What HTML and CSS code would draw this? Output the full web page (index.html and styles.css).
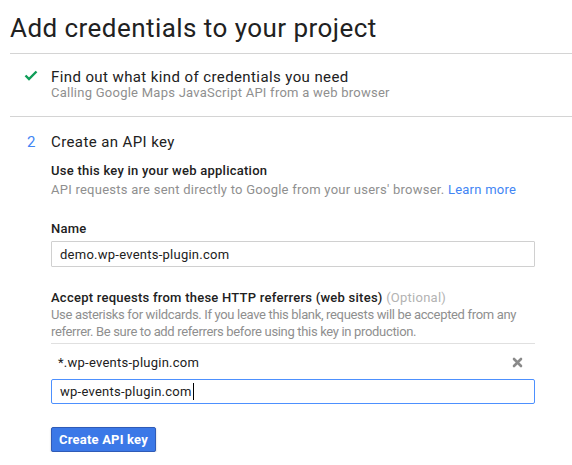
FILE: index.html
```html
<!DOCTYPE html>
<html>
<head>
<meta charset="utf-8">
<link rel="stylesheet" href="styles.css">
</head>
<body>
<h1 class="title">Add credentials to your project</h1>
<div class="step step-done">
  <div class="step-marker">
    <svg class="check" width="14" height="11" viewBox="0 0 14 11"><path d="M1.5 5.5 L5 9 L12.5 1.5" fill="none" stroke="#0f9d58" stroke-width="2.4"/></svg>
  </div>
  <div class="step-body">
    <div class="step-title">Find out what kind of credentials you need</div>
    <div class="step-sub">Calling Google Maps JavaScript API from a web browser</div>
  </div>
</div>
<div class="step step-active">
  <div class="step-marker num">2</div>
  <div class="step-body">
    <div class="step-title">Create an API key</div>
    <div class="label first">Use this key in your web application</div>
    <div class="help help-gap">API requests are sent directly to Google from your users' browser. <a class="link" href="#">Learn more</a></div>

    <div class="label field-label name-label">Name</div>
    <input class="field" type="text" value="demo.wp-events-plugin.com">

    <div class="label field-label">Accept requests from these HTTP referrers (web sites) <span class="optional">(Optional)</span></div>
    <div class="help help-wide">Use asterisks for wildcards. If you leave this blank, requests will be accepted from any<br>referrer. Be sure to add referrers before using this key in production.</div>

    <div class="ref-list">
      <div class="ref-row">
        <span class="ref-text">*.wp-events-plugin.com</span>
        <svg class="remove" width="11" height="11" viewBox="0 0 11 11"><path d="M2 2 L9 9 M9 2 L2 9" stroke="#8a8a8a" stroke-width="2.6" stroke-linecap="round"/></svg>
      </div>
      <div class="field focused"><span class="field-text">wp-events-plugin.com</span><span class="caret"></span></div>
    </div>

    <button class="btn-primary" type="button">Create API key</button>
  </div>
</div>
</body>
</html>
```

FILE: styles.css
```css
html, body {
  margin: 0;
  padding: 0;
  background: #fff;
}
body {
  font-family: Roboto, "Noto Sans", Arial, sans-serif;
  color: #212121;
  width: 572px;
  overflow: hidden;
  letter-spacing: 0.25px;
}
.title {
  margin: 12px 0 0 10px;
  padding: 0 0 9px 0;
  font-size: 26px;
  font-weight: 400;
  line-height: 32px;
  letter-spacing: 0.45px;
  color: #212121;
  border-bottom: 1px solid #d4d4d4;
}
.step {
  display: flex;
  margin-left: 10px;
}
.step-done {
  padding: 15px 0 15px 0;
  border-bottom: 1px solid #d4d4d4;
}
.step-active {
  padding: 17px 0 0 0;
}
.step-marker {
  width: 41px;
  flex: none;
}
.check {
  display: block;
  margin: 1px 0 0 14px;
}
.num {
  font-size: 15px;
  line-height: 16px;
  color: #4285f4;
  padding-left: 17px;
  box-sizing: border-box;
}
.step-body {
  width: 484px;
}
.step-title {
  font-size: 15px;
  line-height: 16px;
  letter-spacing: 0.4px;
  color: #212121;
}
.step-sub {
  font-size: 13px;
  line-height: 16px;
  color: #8f8f8f;
}
.label {
  font-size: 13px;
  line-height: 17px;
  font-weight: 500;
  color: #212121;
}
.label.first {
  margin-top: 12px;
}
.help {
  font-size: 13px;
  line-height: 17px;
  color: #8f8f8f;
}
.help-gap {
  margin-top: 2px;
}
.help-wide {
  margin-right: -30px;
  letter-spacing: -0.33px;
  white-space: nowrap;
}
.link {
  color: #4285f4;
  text-decoration: none;
}
.field-label {
  margin-top: 22px;
}
.name-label {
  margin-bottom: 4px;
}
.optional {
  font-weight: 400;
  color: #b3b3b3;
}
.field {
  display: block;
  box-sizing: border-box;
  width: 484px;
  height: 26px;
  margin: 0;
  padding: 0 8px;
  border: 1px solid #d0d0d0;
  border-radius: 1px;
  font-family: Roboto, "Noto Sans", Arial, sans-serif;
  font-size: 13px;
  letter-spacing: 0.25px;
  color: #212121;
  outline: none;
  background: #fff;
}
.ref-list {
  margin-top: 3px;
  border-top: 1px solid #e0e0e0;
}
.ref-row {
  display: flex;
  align-items: center;
  justify-content: space-between;
  padding: 10px 12px 8px 7px;
  font-size: 13px;
  line-height: 17px;
  color: #212121;
}
.remove {
  display: block;
}
.field.focused {
  display: flex;
  align-items: center;
  height: 25px;
  border: 1px solid #4d90fe;
  border-radius: 2px;
  line-height: 17px;
}
.caret {
  display: inline-block;
  width: 1px;
  height: 17px;
  background: #000;
  margin-left: 1px;
}
.btn-primary {
  display: block;
  margin-top: 23px;
  box-sizing: border-box;
  width: 105px;
  height: 25px;
  padding: 0;
  border: 1px solid #2f5bb7;
  border-radius: 2px;
  background: #3b78e7;
  box-shadow: 0 1px 2px rgba(0,0,0,0.25);
  color: #fff;
  font-family: Roboto, "Noto Sans", Arial, sans-serif;
  font-size: 13px;
  font-weight: 700;
  letter-spacing: 0.2px;
  line-height: 23px;
  text-align: center;
}
```
